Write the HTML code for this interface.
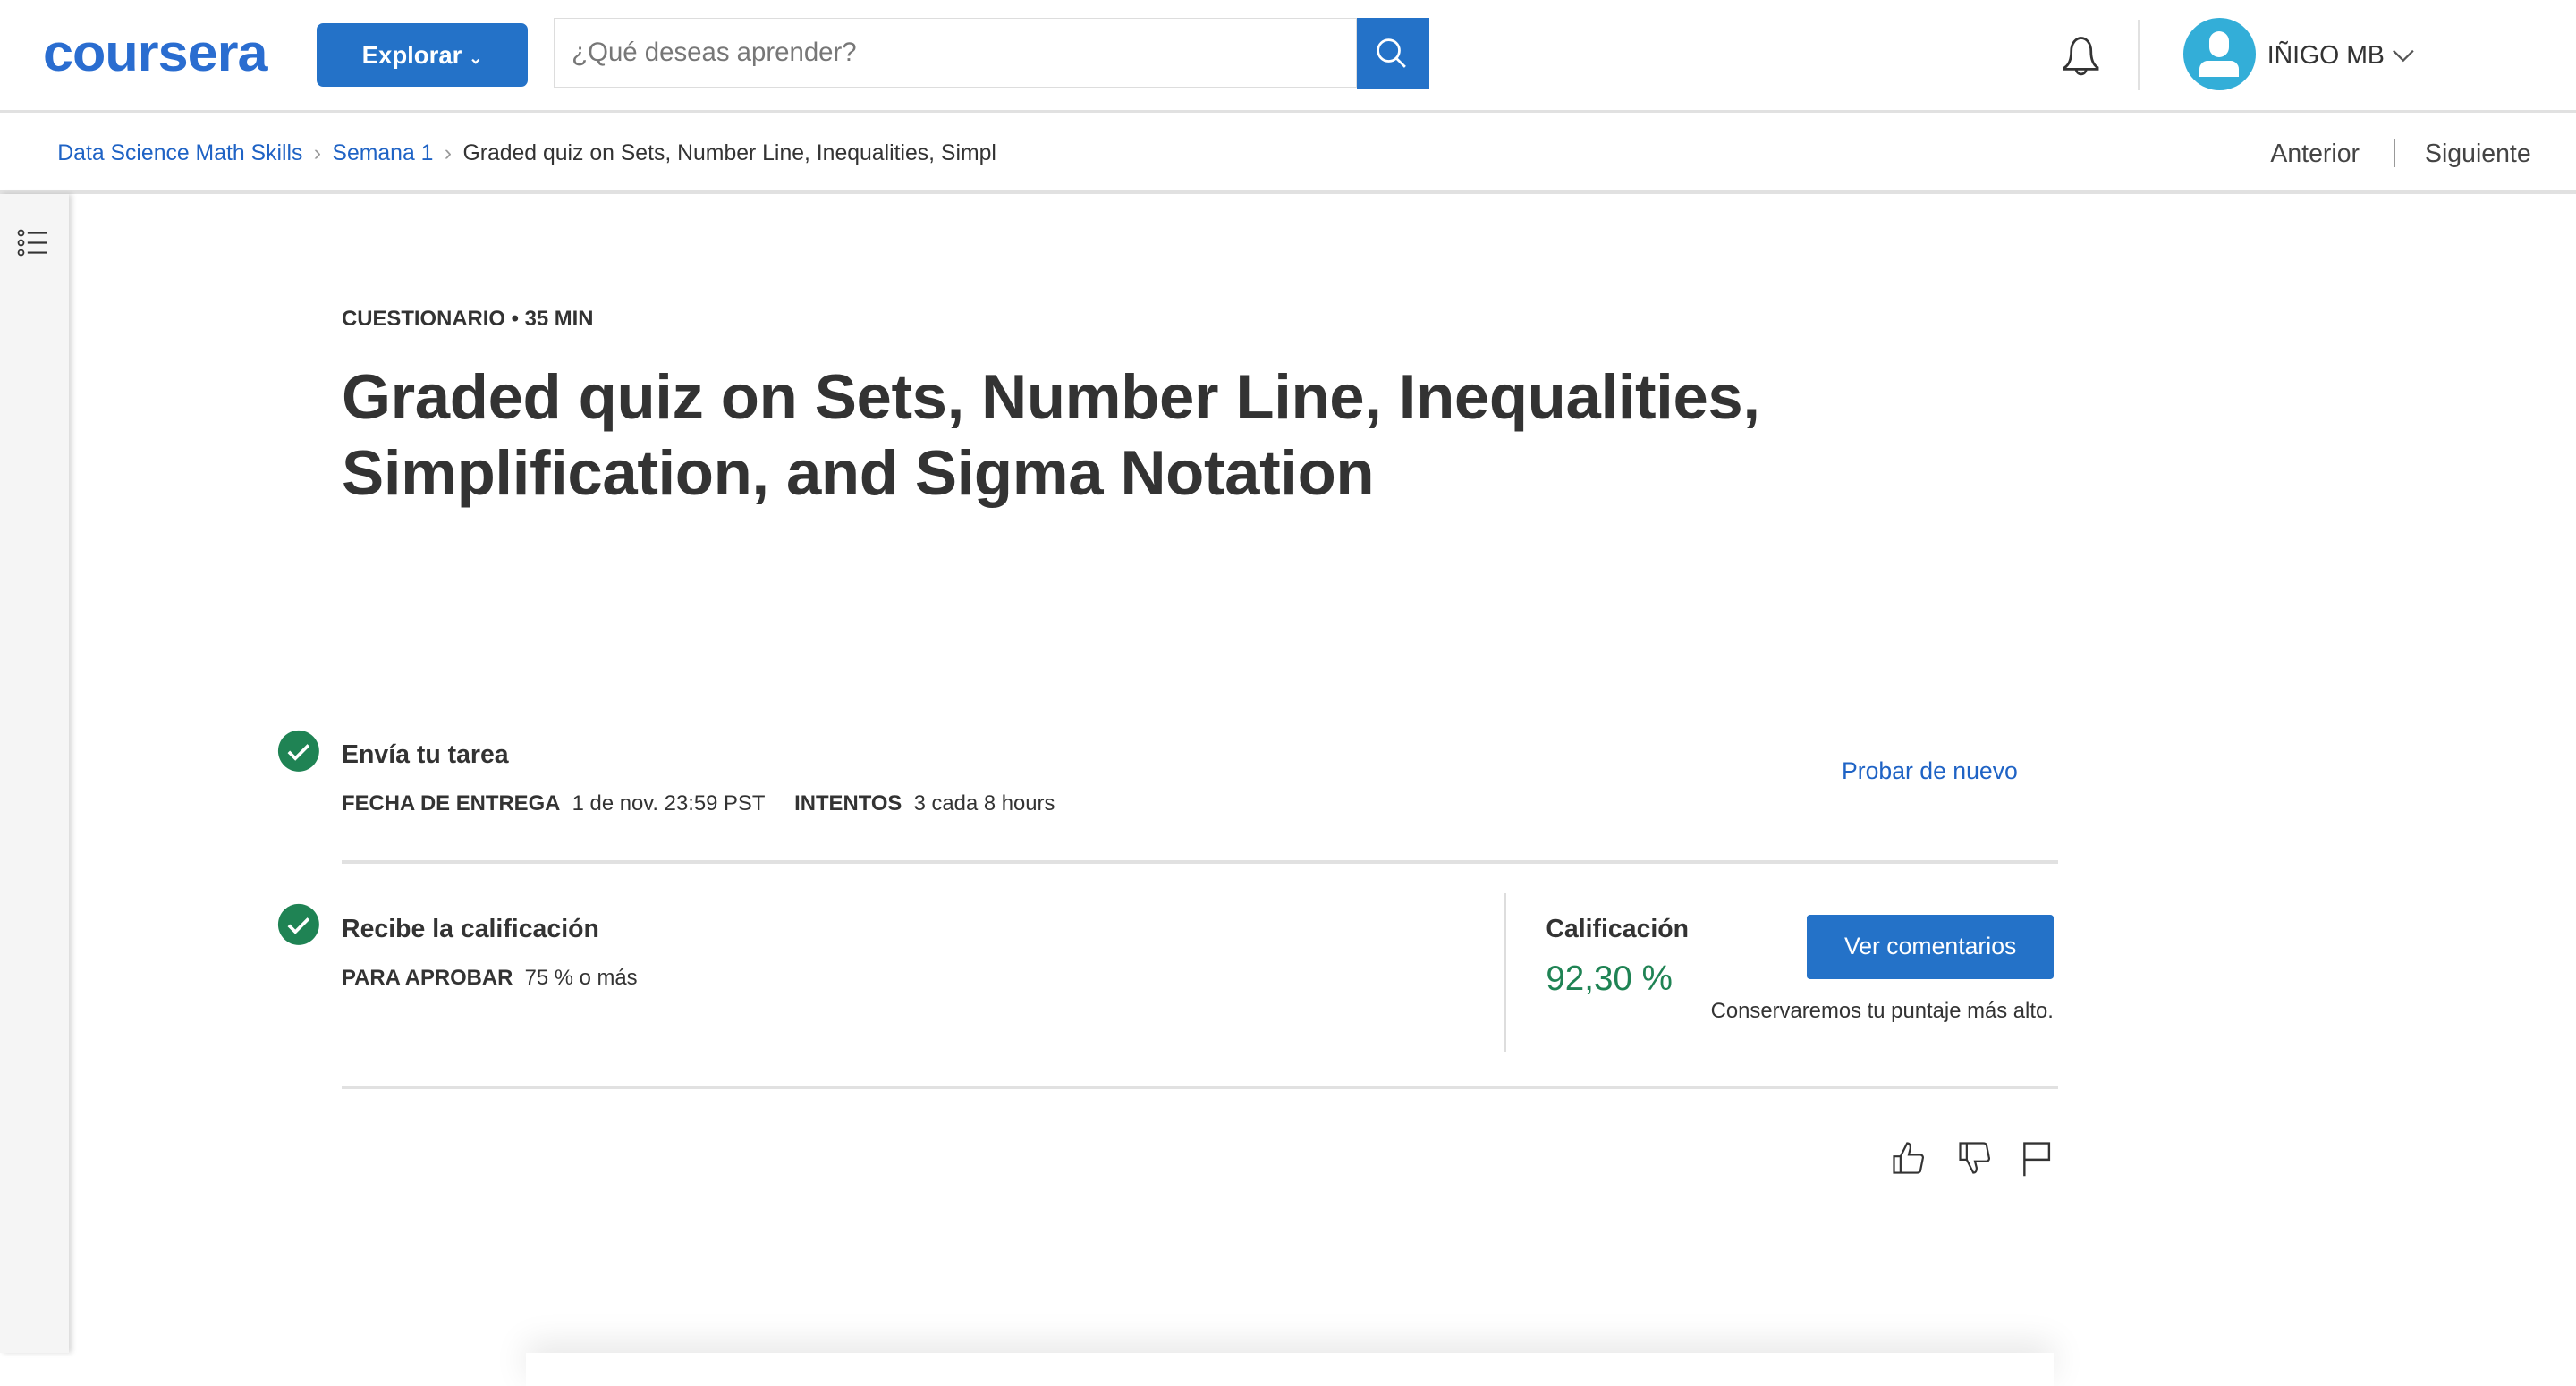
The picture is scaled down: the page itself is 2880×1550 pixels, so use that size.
<!DOCTYPE html>
<html><head><meta charset="utf-8">
<style>
html,body{margin:0;padding:0;}
body{width:1568px;height:824px;zoom:1.83673;overflow:hidden;background:#fff;font-family:"Liberation Sans",sans-serif;color:#333;position:relative;}
.a{position:absolute;white-space:nowrap;}
.blue{color:#1f63c5;}
</style></head><body>
<!-- header -->
<div class="a" style="left:0;top:0;width:1568px;height:67px;border-bottom:2px solid #e1e1e1;"></div>
<div class="a" style="left:26px;top:14px;font-size:32px;font-weight:bold;color:#2a6dd0;letter-spacing:-0.5px;transform:scaleX(1.04);transform-origin:left;">coursera</div>
<div class="a" style="left:193px;top:14px;width:128px;height:39px;background:#2472c8;border-radius:4px;color:#fff;font-weight:bold;font-size:15px;line-height:39px;text-align:center;">Explorar <span style="font-size:10px">&#8964;</span></div>
<div class="a" style="left:337px;top:11px;width:488px;height:41px;border:1px solid #ddd;"></div>
<div class="a" style="left:348px;top:23px;font-size:16px;color:#777;">¿Qué deseas aprender?</div>
<div class="a" style="left:826px;top:11px;width:44px;height:43px;background:#2472c8;"></div>
<svg class="a" style="left:836px;top:22px" width="22" height="22" viewBox="0 0 22 22"><circle cx="9" cy="9" r="6.5" fill="none" stroke="#fff" stroke-width="1.5"/><path d="M13.5 13.5L19 19" stroke="#fff" stroke-width="1.5"/></svg>
<svg class="a" style="left:1253px;top:20px" width="28" height="30" viewBox="0 0 28 30"><path d="M4 22h20v-1c-3-2-4-6-4-10 0-5-3-8-6-8s-6 3-6 8c0 4-1 8-4 10z" fill="none" stroke="#333" stroke-width="1.5"/><path d="M11 22a3 3 0 006 0" fill="none" stroke="#333" stroke-width="1.5"/></svg>
<div class="a" style="left:1301px;top:12px;width:2px;height:43px;background:#e1e1e1;"></div>
<div class="a" style="left:1329px;top:11px;width:44px;height:44px;border-radius:50%;background:#33aed8;overflow:hidden;">
<div style="position:absolute;left:16px;top:8px;width:12px;height:16px;border-radius:6px;background:#fff;"></div>
<div style="position:absolute;left:10px;top:26px;width:24px;height:10px;border-radius:5px 5px 0 0;background:#fff;"></div></div>
<div class="a" style="left:1380px;top:25px;font-size:15.5px;color:#333;">IÑIGO MB</div>
<svg class="a" style="left:1456px;top:29px" width="14" height="10"><path d="M1 2l6 6 6-6" fill="none" stroke="#555" stroke-width="1.2"/></svg>
<!-- breadcrumb -->
<div class="a" style="left:0;top:116px;width:1568px;height:2px;background:#e1e1e1;"></div>
<div class="a" style="left:35px;top:86px;font-size:13.5px;"><span class="blue">Data Science Math Skills</span> <span style="color:#999;margin:0 3px">›</span> <span class="blue">Semana 1</span> <span style="color:#999;margin:0 3px">›</span> <span style="color:#333">Graded quiz on Sets, Number Line, Inequalities, Simpl</span></div>
<div class="a" style="left:1382px;top:85px;font-size:15.5px;color:#444;">Anterior</div>
<div class="a" style="left:1457px;top:85px;width:1px;height:17px;background:#999;"></div>
<div class="a" style="left:1476px;top:85px;font-size:15.5px;color:#444;">Siguiente</div>
<!-- sidebar -->
<div class="a" style="left:0;top:118px;width:42px;height:706px;background:#f5f5f5;box-shadow:2px 0 3px rgba(0,0,0,0.15);"></div>
<svg class="a" style="left:10px;top:139px" width="22" height="18"><g fill="none" stroke="#333" stroke-width="1"><circle cx="3" cy="3" r="1.6"/><circle cx="3" cy="9" r="1.6"/><circle cx="3" cy="15" r="1.6"/></g><g stroke="#333" stroke-width="1.2"><path d="M7 3h12M7 9h12M7 15h12"/></g></svg>
<!-- content -->
<div class="a" style="left:208px;top:187px;font-size:13px;font-weight:bold;color:#333;">CUESTIONARIO • 35 MIN</div>
<div class="a" style="left:208px;top:219px;font-size:38.5px;font-weight:bold;color:#333;line-height:46px;letter-spacing:-0.2px;">Graded quiz on Sets, Number Line, Inequalities,<br>Simplification, and Sigma Notation</div>

<svg class="a" style="left:169px;top:444px" width="26" height="26"><circle cx="13" cy="13" r="12.5" fill="#1f8354"/><path d="M7 13.5l4 4 8-8" fill="none" stroke="#fff" stroke-width="2"/></svg>
<div class="a" style="left:208px;top:451px;font-size:15.5px;font-weight:bold;">Envía tu tarea</div>
<div class="a" style="left:208px;top:482px;font-size:13px;"><b>FECHA DE ENTREGA</b>&nbsp; 1 de nov. 23:59 PST &nbsp;&nbsp;&nbsp; <b>INTENTOS</b>&nbsp; 3 cada 8 hours</div>
<div class="a blue" style="left:1121px;top:461px;font-size:14.5px;">Probar de nuevo</div>
<div class="a" style="left:208px;top:524px;width:1045px;height:2px;background:#e1e1e1;"></div>

<svg class="a" style="left:169px;top:550px" width="26" height="26"><circle cx="13" cy="13" r="12.5" fill="#1f8354"/><path d="M7 13.5l4 4 8-8" fill="none" stroke="#fff" stroke-width="2"/></svg>
<div class="a" style="left:208px;top:557px;font-size:15.5px;font-weight:bold;">Recibe la calificación</div>
<div class="a" style="left:208px;top:588px;font-size:13px;"><b>PARA APROBAR</b>&nbsp; 75 % o más</div>
<div class="a" style="left:916px;top:544px;width:1px;height:97px;background:#ddd;"></div>
<div class="a" style="left:941px;top:557px;font-size:15.5px;font-weight:bold;">Calificación</div>
<div class="a" style="left:941px;top:584px;font-size:21px;color:#1f8354;">92,30 %</div>
<div class="a" style="left:1100px;top:557px;width:150px;height:39px;background:#2472c8;border-radius:2px;color:#fff;font-size:14.5px;line-height:39px;text-align:center;">Ver comentarios</div>
<div class="a" style="left:1000px;width:250px;text-align:right;top:608px;font-size:13px;">Conservaremos tu puntaje más alto.</div>
<div class="a" style="left:208px;top:661px;width:1045px;height:2px;background:#e1e1e1;"></div>

<svg class="a" style="left:1150px;top:693px" width="24" height="24" viewBox="0 0 24 24"><path d="M3 11h4v10H3zM7 11l4-8c2 0 2 2 2 3l-1 4h7c1 0 2 1 1.5 2.5L19 20c-.3.7-1 1-2 1H7" fill="none" stroke="#333" stroke-width="1.2"/></svg>
<svg class="a" style="left:1190px;top:693px" width="24" height="24" viewBox="0 0 24 24"><path d="M3 3h4v10H3zM7 13l4 8c2 0 2-2 2-3l-1-4h7c1 0 2-1 1.5-2.5L19 4c-.3-.7-1-1-2-1H7" fill="none" stroke="#333" stroke-width="1.2"/></svg>
<svg class="a" style="left:1228px;top:693px" width="24" height="24" viewBox="0 0 24 24"><path d="M4 23V3h15v10H4" fill="none" stroke="#333" stroke-width="1.3"/></svg>
<div class="a" style="left:320px;top:824px;width:930px;height:20px;box-shadow:0 -6px 20px rgba(0,0,0,0.10);"></div>
</body></html>
